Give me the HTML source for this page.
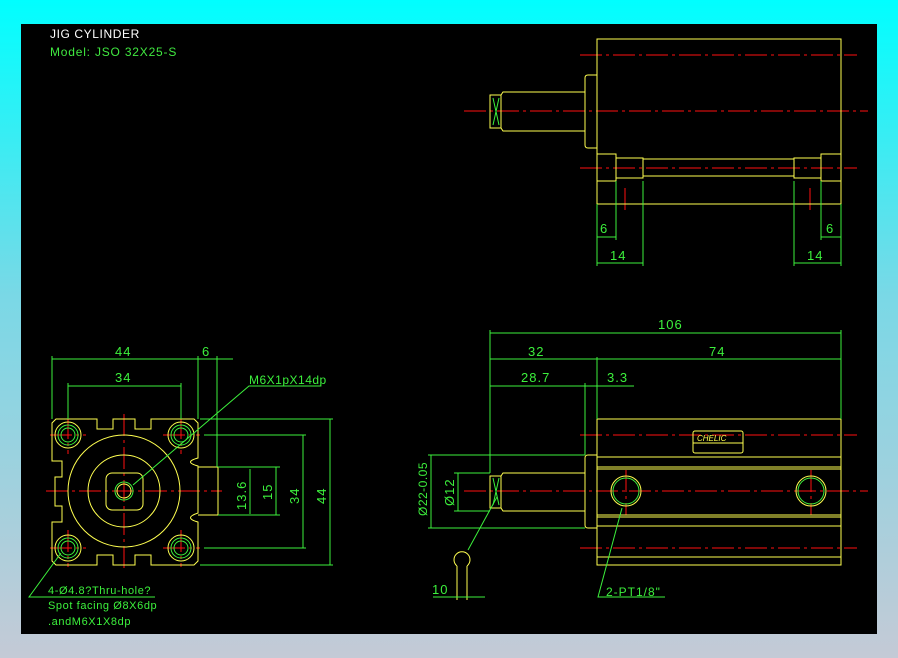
<!DOCTYPE html>
<html><head><style>
html,body{margin:0;padding:0;}
body{width:898px;height:658px;background:linear-gradient(180deg,#00ffff 0%,#7ad8e6 45%,#c4cad6 100%);position:relative;overflow:hidden;}
svg{position:absolute;left:0;top:0;}
text{font-family:"Liberation Sans",sans-serif;}
</style></head><body>
<svg width="898" height="658" viewBox="0 0 898 658">
<rect x="21" y="24" width="856" height="610" fill="#000"/>
<text x="50" y="38" fill="#fff" font-size="12" letter-spacing="0.6">JIG CYLINDER</text>
<text x="50" y="56" fill="#40e840" font-size="12" letter-spacing="0.8">Model:  JSO 32X25-S</text>

<g fill="none" stroke-width="1">
<g stroke="#ff1010" stroke-dasharray="22,4,3,4">
<line x1="580" y1="55" x2="857" y2="55"/>
<line x1="464" y1="111" x2="868" y2="111"/>
<line x1="580" y1="168" x2="857" y2="168"/>
<line x1="625" y1="188" x2="625" y2="213"/>
<line x1="810" y1="188" x2="810" y2="213"/>
<line x1="580" y1="435" x2="857" y2="435"/>
<line x1="464" y1="491" x2="868" y2="491"/>
<line x1="580" y1="548" x2="857" y2="548"/>
<line x1="626" y1="470" x2="626" y2="515"/>
<line x1="811" y1="470" x2="811" y2="515"/>
<line x1="46" y1="491" x2="222" y2="491"/>
<line x1="124" y1="414" x2="124" y2="570"/>
<line x1="50" y1="435" x2="86" y2="435"/><line x1="68" y1="417" x2="68" y2="454"/>
<line x1="163" y1="435" x2="200" y2="435"/><line x1="181" y1="417" x2="181" y2="454"/>
<line x1="50" y1="548" x2="86" y2="548"/><line x1="68" y1="530" x2="68" y2="567"/>
<line x1="163" y1="548" x2="200" y2="548"/><line x1="181" y1="530" x2="181" y2="567"/>
</g>

<g stroke="#ffff50">
<rect x="597" y="39" width="244" height="165"/>
<path d="M597 75 H588 Q585 75 585 78 V145 Q585 148 588 148 H597"/>
<path d="M585 92 H503 L501 95 V128 L503 131 H585"/>
<rect x="490" y="95" width="11" height="33"/>
<rect x="597" y="154" width="19" height="27"/>
<rect x="616" y="158" width="27" height="20"/>
<line x1="643" y1="159" x2="794" y2="159"/><line x1="643" y1="176" x2="794" y2="176"/>
<rect x="794" y="158" width="27" height="20"/>
<rect x="821" y="154" width="20" height="27"/>
<rect x="597" y="419" width="244" height="146"/>
<line x1="597" y1="457" x2="841" y2="457"/>
<line x1="597" y1="467" x2="841" y2="467"/>
<line x1="597" y1="469" x2="841" y2="469"/>
<line x1="597" y1="515" x2="841" y2="515"/>
<line x1="597" y1="517" x2="841" y2="517"/>
<line x1="597" y1="526" x2="841" y2="526"/>
<line x1="597" y1="557" x2="841" y2="557"/>
<path d="M597 455 H588 Q585 455 585 458 V525 Q585 528 588 528 H597"/>
<path d="M585 473 H503 L501 476 V508 L503 511 H585"/>
<rect x="490" y="476" width="11" height="32"/>
<rect x="693" y="431" width="50" height="22" rx="2"/>
<line x1="693" y1="443" x2="743" y2="443"/>
<circle cx="626" cy="491" r="15"/><circle cx="811" cy="491" r="15"/>
<path d="M457 566 A8 8 0 1 1 467 566"/>
<path d="M457 566 V600 M467 566 V600"/>
<path d="M56 419 H97 V429 H113 V419 H135 V429 H151 V419 H194 L198 423 V458 Q183 462 198 466 V513 Q183 518 198 522 V561 L194 565 H151 V555 H135 V565 H113 V555 H97 V565 H56 L52 561 V522 H62 V506 H55 V477 H62 V461 H52 V423 Z"/>
<path d="M198 467 H218 V515 H198"/>
<circle cx="124" cy="491" r="56"/>
<circle cx="124" cy="491" r="36"/>
<rect x="106" y="473" width="37" height="37" rx="6"/>
<circle cx="68" cy="435" r="13"/><circle cx="181" cy="435" r="13"/>
<circle cx="68" cy="548" r="13"/><circle cx="181" cy="548" r="13"/>
<circle cx="124" cy="491" r="7"/>
</g>
<text x="697" y="441" fill="#ffff50" font-size="8" font-style="italic">CHELIC</text>

<g stroke="#3cf03c">
<circle cx="68" cy="435" r="10"/><circle cx="181" cy="435" r="10"/>
<circle cx="68" cy="548" r="10"/><circle cx="181" cy="548" r="10"/>
<circle cx="68" cy="435" r="7"/><circle cx="181" cy="435" r="7"/>
<circle cx="68" cy="548" r="7"/><circle cx="181" cy="548" r="7"/>
<circle cx="124" cy="491" r="9"/>
<circle cx="626" cy="491" r="13"/><circle cx="811" cy="491" r="13"/>
<path d="M493 98 L499 125 M499 98 L493 125 M493 478 L499 505 M499 478 L493 505"/>
<path d="M597 204 V266 M616 181 V240 M643 181 V266 M794 181 V266 M821 181 V240 M841 204 V266"/>
<path d="M597 237 H616 M597 263 H643 M821 237 H841 M794 263 H841"/>
<path d="M52 419 V356 M68 419 V383 M181 419 V383 M198 419 V356 M217 467 V356"/>
<path d="M52 359 H233 M68 386 H181"/>
<path d="M200 419 H333 M204 435 H306 M218 467 H280 M218 515 H280 M200 565 H333 M204 548 H306"/>
<path d="M330 419 V565 M303 435 V548 M276 467 V515 M250 469 V514"/>
<path d="M133 485 L249 386 H321"/>
<path d="M61 553 L29 597 H155"/>
<path d="M490 473 V330 M585 455 V383 M597 419 V357 M841 419 V330"/>
<path d="M490 333 H841 M490 359 H841 M490 386 H634"/>
<path d="M428 455 H585 M428 528 H585 M454 473 H490 M454 511 H490"/>
<path d="M431 455 V528 M458 473 V511"/>
<path d="M497 497 L468 550"/>
<path d="M433 597 H485"/>
<path d="M622 508 L598 597 H665"/>
</g>
</g>

<g fill="#3cf03c" font-size="13" letter-spacing="1">
<text x="600" y="233">6</text>
<text x="826" y="233">6</text>
<text x="610" y="260">14</text>
<text x="807" y="260">14</text>
<text x="115" y="356">44</text>
<text x="202" y="356">6</text>
<text x="115" y="382">34</text>
<text x="249" y="384" font-size="12" letter-spacing="0.5">M6X1pX14dp</text>
<text x="658" y="329">106</text>
<text x="528" y="356">32</text>
<text x="709" y="356">74</text>
<text x="521" y="382">28.7</text>
<text x="607" y="382">3.3</text>
<text x="432" y="594">10</text>
<text x="606" y="596" font-size="12">2-PT1/8"</text>
<text x="48" y="594" font-size="11" letter-spacing="0.6">4-Ø4.8?Thru-hole?</text>
<text x="48" y="609" font-size="11" letter-spacing="0.6">Spot facing  Ø8X6dp</text>
<text x="48" y="625" font-size="11" letter-spacing="0.6">.andM6X1X8dp</text>
<text transform="translate(326,504) rotate(-90)">44</text>
<text transform="translate(299,504) rotate(-90)">34</text>
<text transform="translate(272,500) rotate(-90)">15</text>
<text transform="translate(246,510) rotate(-90)">13.6</text>
<text transform="translate(454,506) rotate(-90)">Ø12</text>
<text transform="translate(427,516) rotate(-90)" font-size="12" letter-spacing="0.5">Ø22-0.05</text>
</g>
</svg>
</body></html>
